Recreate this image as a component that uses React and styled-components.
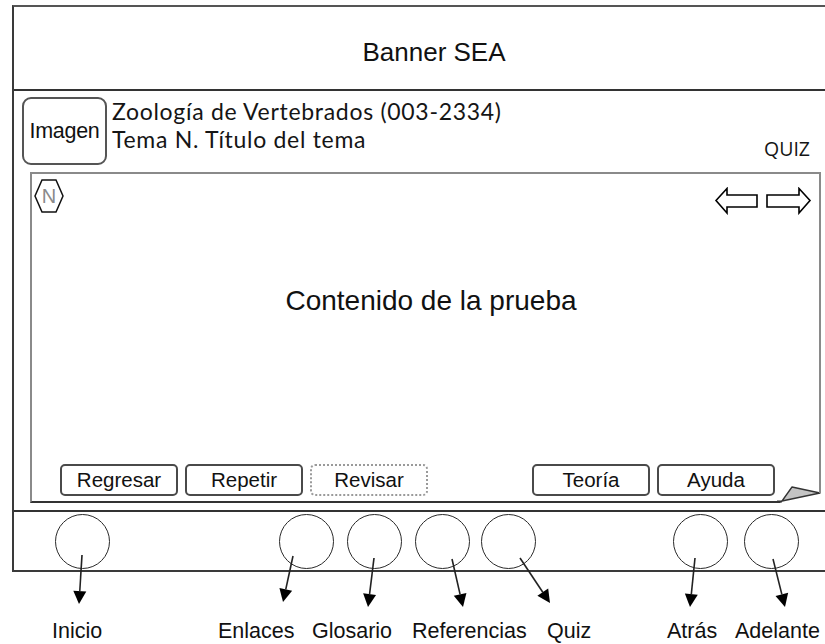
import React from 'react'
import styled, { createGlobalStyle } from 'styled-components'

const GlobalStyle = createGlobalStyle`
  html, body {
    margin: 0;
    padding: 0;
    overflow: hidden;
    background: #fff;
  }
  body {
    font-family: "Liberation Sans", Arial, sans-serif;
    color: #111;
  }
`

const ink = '#222'

const Page = styled.div`
  position: relative;
  width: 825px;
  height: 644px;
  padding: 5px 0 0 12px;
  box-sizing: border-box;
`

const Frame = styled.div`
  box-sizing: border-box;
  width: 844px;
  border: 2px solid #3a3a3a;
  border-top-color: #555;
  display: flex;
  flex-direction: column;
`

const Banner = styled.div`
  height: 84px;
  box-sizing: border-box;
  border-bottom: 2px solid #333;
  display: flex;
  align-items: center;
  justify-content: center;
  font-size: 26px;
  padding-top: 8px;
`

const Header = styled.div`
  height: 81px;
  box-sizing: border-box;
  display: flex;
  align-items: flex-start;
  padding: 6px 44px 0 8px;
`

const ImageBox = styled.div`
  width: 85px;
  height: 68px;
  box-sizing: border-box;
  border: 2px solid #555;
  border-radius: 9px;
  display: flex;
  align-items: center;
  justify-content: center;
  font-size: 21.5px;
  letter-spacing: -0.3px;
`

const Titles = styled.div`
  margin: 0 0 0 5px;
  font-family: Lato, "Open Sans", sans-serif;
  font-size: 23px;
  letter-spacing: 0.7px;
  line-height: 28px;
  color: #151515;
`

const QuizTag = styled.div`
  margin-left: auto;
  align-self: flex-end;
  margin-bottom: 10px;
  font-family: "Open Sans", "Noto Sans", sans-serif;
  font-size: 19.5px;
  color: #151515;
`

const Panel = styled.div`
  position: relative;
  box-sizing: border-box;
  height: 331px;
  margin: 0 33px 7px 16px;
  border: 2px solid #8a8a8a;
  border-bottom-color: #333;
  display: flex;
  flex-direction: column;
`

const TopBar = styled.div`
  display: flex;
  justify-content: space-between;
  align-items: flex-start;
  padding: 5px 7px 0 2px;
`

const HexBadge = styled.div`
  display: grid;
  width: 30px;
  height: 34px;
  & > * {
    grid-area: 1 / 1;
  }
  span {
    align-self: center;
    justify-self: center;
    font-size: 20px;
    color: #8a8a8a;
  }
`

const NavArrows = styled.svg`
  margin-top: 8px;
`

const Body = styled.div`
  padding: 70px 0 0 11px;
  text-align: center;
  font-size: 28px;
  color: #111;
`

const ButtonBar = styled.div`
  margin-top: auto;
  display: flex;
  justify-content: space-between;
  padding: 0 44px 5px 28px;
`

const ButtonGroup = styled.div`
  display: flex;
  gap: 7px;
`

const Button = styled.div`
  width: 118px;
  height: 32px;
  box-sizing: border-box;
  border: 2px ${({ $dotted }) => ($dotted ? 'dotted #9a9a9a' : 'solid #4a4a4a')};
  border-radius: 5px;
  display: flex;
  align-items: center;
  justify-content: center;
  font-size: 20.5px;
  color: #111;
`

const Curl = styled.svg`
  position: absolute;
  right: -2px;
  bottom: -2px;
`

const Footer = styled.div`
  height: 58px;
  border-top: 2px solid #333;
  display: grid;
  grid-template-columns: 224px 68px 68px 66px 192px 71px auto;
  align-items: center;
  padding-left: 41px;
`

const Circle = styled.div`
  width: 55px;
  height: 55px;
  box-sizing: border-box;
  border: 1.5px solid #2a2a2a;
  border-radius: 50%;
`

const LabelRow = styled.div`
  margin-top: 47px;
  display: grid;
  grid-template-columns: 166px 94px 100px 135px 120px 68px auto;
  padding-left: 40px;
  font-size: 21.5px;
  color: #111;
`

const Overlay = styled.svg`
  position: absolute;
  top: 0;
  left: 0;
  pointer-events: none;
`

const navItems = [
  { label: 'Inicio', from: [82, 555], to: [79, 604] },
  { label: 'Enlaces', from: [293, 556], to: [283, 602] },
  { label: 'Glosario', from: [374, 558], to: [368, 607] },
  { label: 'Referencias', from: [452, 559], to: [463, 607] },
  { label: 'Quiz', from: [520, 558], to: [550, 603] },
  { label: 'Atrás', from: [695, 558], to: [690, 607] },
  { label: 'Adelante', from: [773, 559], to: [785, 607] },
]

// arrow line plus filled head, head computed from direction
const Arrow = ({ from, to }) => {
  const [x1, y1] = from
  const [x2, y2] = to
  const len = Math.hypot(x2 - x1, y2 - y1)
  const ux = (x2 - x1) / len
  const uy = (y2 - y1) / len
  const bx = x2 - ux * 13
  const by = y2 - uy * 13
  const px = -uy * 6.5
  const py = ux * 6.5
  return (
    <g>
      <line x1={x1} y1={y1} x2={bx} y2={by} stroke={ink} strokeWidth="1.6" />
      <polygon
        points={`${x2},${y2} ${bx + px},${by + py} ${bx - px},${by - py}`}
        fill="#000"
      />
    </g>
  )
}

const App = () => (
  <Page>
    <GlobalStyle />
    <Frame>
      <Banner>Banner SEA</Banner>
      <Header>
        <ImageBox>Imagen</ImageBox>
        <Titles>
          <div>Zoología de Vertebrados (003-2334)</div>
          <div>Tema N. Título del tema</div>
        </Titles>
        <QuizTag>QUIZ</QuizTag>
      </Header>
      <Panel>
        <TopBar>
          <HexBadge>
            <svg width="30" height="34" viewBox="0 0 30 34">
              <polygon
                points="8,1 22,1 29,17 22,33 8,33 1,17"
                fill="none"
                stroke="#111"
                strokeWidth="1.5"
              />
            </svg>
            <span>N</span>
          </HexBadge>
          <NavArrows width="98" height="28" viewBox="0 0 98 28">
            <polygon
              points="2,13.5 13,1.5 13,8 43,8 43,20 13,20 13,26"
              fill="#fff"
              stroke="#000"
              strokeWidth="1.6"
              strokeLinejoin="miter"
            />
            <polygon
              points="53,8 85,8 85,1.5 96,13.5 85,26 85,20 53,20"
              fill="#fff"
              stroke="#000"
              strokeWidth="1.6"
            />
          </NavArrows>
        </TopBar>
        <Body>Contenido de la prueba</Body>
        <ButtonBar>
          <ButtonGroup>
            <Button>Regresar</Button>
            <Button>Repetir</Button>
            <Button $dotted>Revisar</Button>
          </ButtonGroup>
          <ButtonGroup>
            <Button>Teoría</Button>
            <Button>Ayuda</Button>
          </ButtonGroup>
        </ButtonBar>
        <Curl width="44" height="24" viewBox="0 0 44 24">
          <polygon points="3,24 44,24 44,14 5,22" fill="#fff" />
          <rect x="5" y="21" width="39" height="3" fill="#fff" />
          <rect x="40" y="13" width="4" height="11" fill="#fff" />
          <polygon points="5,22 15,8 43,14" fill="#c4c4c4" stroke="#333" strokeWidth="1.3" strokeLinejoin="round" />
          <line x1="0" y1="22.5" x2="5" y2="22.5" stroke="#333" strokeWidth="2" />
          <line x1="43" y1="0" x2="43" y2="14" stroke="#8a8a8a" strokeWidth="2" />
        </Curl>
      </Panel>
      <Footer>
        {navItems.map((n) => (
          <Circle key={n.label} />
        ))}
      </Footer>
    </Frame>
    <LabelRow>
      {navItems.map((n) => (
        <span key={n.label}>{n.label}</span>
      ))}
    </LabelRow>
    <Overlay width="825" height="644">
      {navItems.map((n) => (
        <Arrow key={n.label} from={n.from} to={n.to} />
      ))}
    </Overlay>
  </Page>
)

export default App
